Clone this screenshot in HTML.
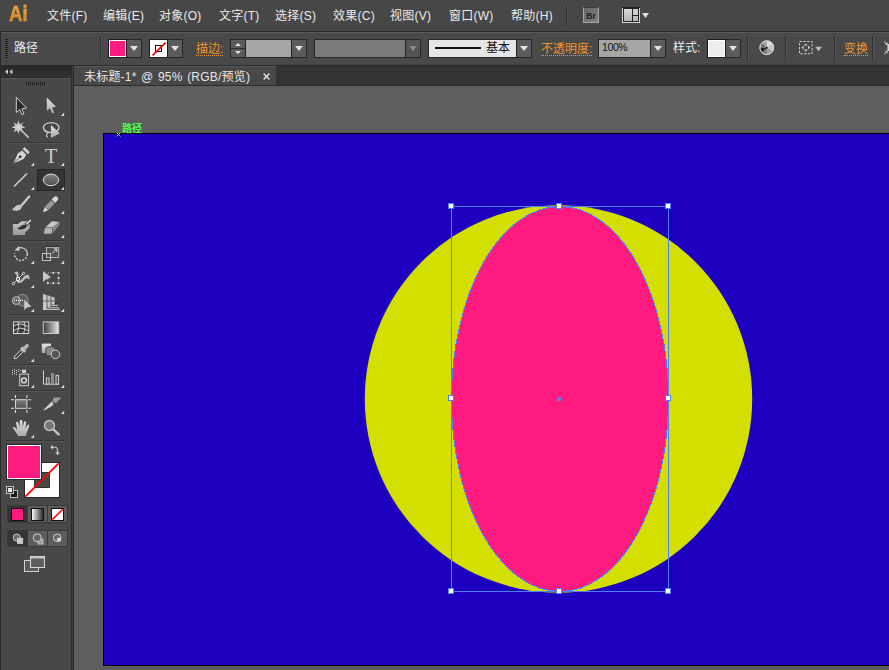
<!DOCTYPE html>
<html lang="zh-CN"><head><meta charset="utf-8"><title>未标题-1* @ 95% (RGB/预览)</title>
<style>
html,body{margin:0;padding:0;}
body{width:889px;height:670px;overflow:hidden;position:relative;background:#616161;font-family:"Liberation Sans","Noto Sans CJK SC",sans-serif;font-size:13px;color:#e6e6e6;}
.abs,#menubar,#ctrl,#tools,#tabbar,#canvas,#artboard{position:absolute;}
#menubar{left:0;top:0;width:889px;height:31px;background:#474747;}
#menubar span.m{position:absolute;top:8px;font-size:12px;line-height:17px;letter-spacing:0.25px;color:#eaeaea;white-space:nowrap;}
#ailogo{position:absolute;left:8.6px;top:2.8px;font-size:21.5px;line-height:23px;font-weight:bold;color:#dc9632;-webkit-text-stroke:0.35px #d8953a;transform:scaleX(0.87);transform-origin:0 0;background:linear-gradient(#e8a84a,#c98320);-webkit-background-clip:text;background-clip:text;-webkit-text-fill-color:transparent;}
#ctrl{left:0;top:31px;width:889px;height:35px;background:#2a2a2a;}
#ctrl .bar{position:absolute;left:1px;top:1px;width:888px;height:33px;background:#494949;border-top:1px solid #5a5a5a;box-sizing:border-box;}
#tools{left:0;top:66px;width:71px;height:604px;background:#484848;border-left:1px solid #2a2a2a;box-sizing:border-box;}
#tabbar{left:74px;top:66px;width:815px;height:19px;background:#333;border-bottom:1px solid #2c2c2c;}
#tab{position:absolute;left:0;top:0;width:202px;height:19px;background:#484848;border-top:1px solid #585858;box-sizing:border-box;}
#tab span{position:absolute;left:10px;top:3px;font-size:12px;line-height:15px;letter-spacing:0.2px;word-spacing:1px;color:#e8e8e8;white-space:nowrap;}
#tab svg{position:absolute;left:189px;top:6px;}
#canvas{left:74px;top:86px;width:815px;height:584px;background:#5e5e5e;}
#artboard{left:103px;top:133px;width:800px;height:531px;background:#1e00c0;border:1px solid #000;}

#ctrl .grip{position:absolute;left:5px;top:8px;width:3px;height:20px;background:repeating-linear-gradient(#222 0,#222 1px,transparent 1px,transparent 2px);}
#ctrl .lbl{position:absolute;top:8px;font-size:12px;line-height:18px;color:#ececec;white-space:nowrap;}
#ctrl .lbl.or{color:#f0952a;border-bottom:1px dotted #f0952a;line-height:12px;top:12px;}
#ctrl .vsep{position:absolute;top:5px;width:1px;height:25px;background:#333;border-right:1px solid #555;}
#ctrl .sw{position:absolute;top:8px;width:17px;height:17px;border:1px solid #1d1d1d;background:#fff;}
#ctrl .sw i{position:absolute;left:1px;top:1px;right:1px;bottom:1px;}
#ctrl .dd{position:absolute;top:8px;width:14px;height:17px;border:1px solid #262626;border-left:none;background:#5b5b5b;}
#ctrl .dd b{position:absolute;left:50%;top:6px;margin-left:-4px;width:0;height:0;border-left:4px solid transparent;border-right:4px solid transparent;border-top:5.4px solid #e2e2e2;}
#ctrl .dd.dis{background:#555;}
#ctrl .dd.dis b{border-top-color:#8a8a8a;}
#ctrl .inp{position:absolute;top:8px;height:17px;border:1px solid #262626;background:#a6a6a6;box-sizing:content-box;}
#ctrl .inp.dis{background:#7b7b7b;}
#ctrl .inp.lt{background:#e6e6e6;color:#111;}
#ctrl .inp.lt em{position:absolute;left:6px;top:7px;width:46px;height:2.3px;background:#111;}
#ctrl .inp.lt span{position:absolute;left:57px;top:-1px;font-size:12px;line-height:18px;color:#111;}
#ctrl .inp .t{position:absolute;left:3px;top:0;font-size:10.5px;line-height:15px;color:#111;letter-spacing:-0.4px;}
#ctrl .spin{position:absolute;top:8px;width:14px;height:17px;border:1px solid #262626;border-right:none;background:#5b5b5b;}
#ctrl .spin u{position:absolute;left:4px;top:3px;width:0;height:0;border-left:3.2px solid transparent;border-right:3.2px solid transparent;border-bottom:3.4px solid #e8e8e8;}
#ctrl .spin:after{content:"";position:absolute;left:0;right:0;top:8px;height:1px;background:#2a2a2a;}
#ctrl .spin s{position:absolute;left:4px;top:11.4px;width:0;height:0;border-left:3.2px solid transparent;border-right:3.2px solid transparent;border-top:3.4px solid #e8e8e8;}
</style></head><body>
<div id="canvas"></div>
<div id="artboard"></div>
<svg class="abs" id="art" style="left:0;top:0" width="889" height="670" viewBox="0 0 889 670">
  <circle cx="558.5" cy="398.9" r="193.7" fill="#d2df00"/>
  <ellipse cx="560" cy="399" rx="108.5" ry="192.5" fill="#ff1a80" stroke="#4f80ff" stroke-width="1" shape-rendering="crispEdges"/>
  <rect x="451.5" y="206.5" width="217" height="385" fill="none" stroke="#4f80ff" stroke-width="1" shape-rendering="crispEdges"/>
  <g shape-rendering="crispEdges"><rect x="448" y="203" width="6" height="6" fill="#4f80ff"/><rect x="449" y="204" width="4" height="4" fill="#fff"/><rect x="556" y="203" width="6" height="6" fill="#4f80ff"/><rect x="557" y="204" width="4" height="4" fill="#fff"/><rect x="665" y="203" width="6" height="6" fill="#4f80ff"/><rect x="666" y="204" width="4" height="4" fill="#fff"/><rect x="448" y="395" width="6" height="6" fill="#4f80ff"/><rect x="449" y="396" width="4" height="4" fill="#fff"/><rect x="665" y="395" width="6" height="6" fill="#4f80ff"/><rect x="666" y="396" width="4" height="4" fill="#fff"/><rect x="448" y="588" width="6" height="6" fill="#4f80ff"/><rect x="449" y="589" width="4" height="4" fill="#fff"/><rect x="556" y="588" width="6" height="6" fill="#4f80ff"/><rect x="557" y="589" width="4" height="4" fill="#fff"/><rect x="665" y="588" width="6" height="6" fill="#4f80ff"/><rect x="666" y="589" width="4" height="4" fill="#fff"/><rect x="557" y="397" width="4" height="4" fill="#4f80ff"/></g>
  <path d="M116.5 132.5L120.5 136.5M120.5 132.5L116.5 136.5" stroke="#4fff4f" stroke-width="1"/>
  <text x="122" y="132.2" font-family="'Liberation Sans','Noto Sans CJK SC',sans-serif" font-size="10" font-weight="bold" fill="#4fff4f">路径</text>
</svg>
<div id="menubar">
  <div id="ailogo">Ai</div>
  <div class="abs" style="left:566px;top:5px;width:1px;height:20px;background:#2e2e2e;border-right:1px solid #525252"></div>
  <div class="abs" id="br" style="left:583px;top:7px;width:16px;height:16px;box-sizing:border-box;background:linear-gradient(135deg,#666,#828282);border:1px solid #a8a8a8;border-top-color:#3a3a3a;"><span style="position:absolute;left:0;top:4px;width:14px;text-align:center;font-size:8.5px;line-height:9px;font-weight:bold;color:#1c1c1c;">Br</span></div>
  <svg class="abs" style="left:621px;top:6px" width="30" height="18" viewBox="621 6 30 18">
    <defs><linearGradient id="gLay" x1="0" y1="0" x2="0" y2="1"><stop offset="0" stop-color="#dadada"/><stop offset="1" stop-color="#b4b4b4"/></linearGradient></defs>
    <rect x="622" y="7" width="18" height="16" fill="#d6d6d6"/>
    <rect x="622" y="7" width="18" height="1" fill="#1e1e1e"/>
    <rect x="623" y="8" width="16" height="14" fill="#222"/>
    <rect x="624" y="9" width="8" height="12" fill="url(#gLay)"/>
    <rect x="633" y="9" width="5" height="6" fill="#d0d0d0"/>
    <rect x="633" y="16" width="5" height="5" fill="#bcbcbc"/>
    <path d="M642 13H649L645.5 18Z" fill="#dedede"/>
  </svg>
  <span class="m" style="left:47px">文件(F)</span>
  <span class="m" style="left:103px">编辑(E)</span>
  <span class="m" style="left:159px">对象(O)</span>
  <span class="m" style="left:219px">文字(T)</span>
  <span class="m" style="left:275px">选择(S)</span>
  <span class="m" style="left:333px">效果(C)</span>
  <span class="m" style="left:390px">视图(V)</span>
  <span class="m" style="left:449px">窗口(W)</span>
  <span class="m" style="left:511px">帮助(H)</span>
</div>
<div id="ctrl"><div class="bar"></div>
  <div class="grip"></div>
  <span class="lbl" style="left:14px">路径</span>
  <div class="vsep" style="left:100px"></div>
  <div class="sw" style="left:108px"><i style="background:#ff1a80"></i></div><div class="dd" style="left:127px"><b></b></div>
  <div class="sw" style="left:149px"><i style="background:#fff"></i><svg width="19" height="19" viewBox="0 0 19 19" style="position:absolute;left:0;top:0"><rect x="5.5" y="5.5" width="6" height="6" fill="none" stroke="#111" stroke-width="1"/><line x1="2.6" y1="15.4" x2="15.6" y2="2.6" stroke="#f00" stroke-width="1.8"/></svg></div><div class="dd" style="left:168px"><b></b></div>
  <span class="lbl or" style="left:196px">描边:</span>
  <div class="spin" style="left:230px"><u></u><s></s></div><div class="inp" style="left:245px;width:45px"></div><div class="dd" style="left:292px"><b></b></div>
  <div class="inp dis" style="left:314px;width:90px"></div><div class="dd dis" style="left:406px"><b></b></div>
  <div class="inp lt" style="left:428px;width:87px"><em></em><span>基本</span></div><div class="dd" style="left:517px"><b></b></div>
  <span class="lbl or" style="left:541px">不透明度:</span>
  <div class="inp" style="left:598px;width:51px"><span class="t">100%</span></div><div class="dd" style="left:651px"><b></b></div>
  <span class="lbl" style="left:673px">样式:</span>
  <div class="sw" style="left:707px"><i style="background:#ececec"></i></div><div class="dd" style="left:726px"><b></b></div>
  <div class="vsep" style="left:747px"></div>
  <div class="vsep" style="left:785px"></div>
  <div class="vsep" style="left:834px"></div>
  <div class="vsep" style="left:872px"></div>
  <svg class="abs" style="left:755px;top:4px" width="134" height="28" viewBox="755 35 134 28">
    <defs>
      <linearGradient id="gw1" x1="0" y1="1" x2="1" y2="0"><stop offset="0" stop-color="#444"/><stop offset="0.45" stop-color="#9a9a9a"/><stop offset="1" stop-color="#e4e4e4"/></linearGradient>
    </defs>
    <circle cx="766.8" cy="47.7" r="6.9" fill="#b0b0b0" stroke="#cfcfcf" stroke-width="0.9"/><path d="M766.8 47.7L766.80 41.10A6.6 6.6 0 0 1 772.52 44.40Z" fill="#dcdcdc"/><path d="M766.8 47.7L772.52 44.40A6.6 6.6 0 0 1 772.52 51.00Z" fill="#c6c6c6"/><path d="M766.8 47.7L772.52 51.00A6.6 6.6 0 0 1 766.80 54.30Z" fill="#a4a4a4"/><path d="M766.8 47.7L766.80 54.30A6.6 6.6 0 0 1 762.13 52.37Z" fill="#7c7c7c"/><path d="M766.8 47.7L762.13 52.37A6.6 6.6 0 0 1 760.20 47.70Z" fill="#242424"/><path d="M766.8 47.7L760.20 47.70A6.6 6.6 0 0 1 762.13 43.03Z" fill="#6c6c6c"/><path d="M766.8 47.7L762.13 43.03A6.6 6.6 0 0 1 766.80 41.10Z" fill="#a0a0a0"/><circle cx="766.8" cy="47.7" r="6.9" fill="none" stroke="#d4d4d4" stroke-width="0.9"/><circle cx="766.8" cy="47.7" r="1" fill="#1a1a1a"/>
    <rect x="799.5" y="41.5" width="12.6" height="12.2" fill="none" stroke="#d0d0d0" stroke-width="1" stroke-dasharray="2.4 1.4"/>
    <path d="M805.8 43.4L807.8 45.6H803.8ZM805.8 51.8L807.8 49.6H803.8ZM801.4 47.6L803.6 45.6V49.6ZM810.2 47.6L808 45.6V49.6Z" fill="#c8c8c8"/>
    <path d="M815 46.8H822L818.5 51.2Z" fill="#bdbdbd"/>
    <rect x="887.4" y="44" width="2" height="7" fill="#d4d4d4"/>
    <path d="M884 41.4L887 44.2M884 54.2L887 51.4" stroke="#d4d4d4" stroke-width="1"/>
    <path d="M885.2 44.4H887.2V42.4M885.2 51.2H887.2V53.2" stroke="#d4d4d4" stroke-width="0.9" fill="none"/>
  </svg>
  <span class="lbl or" style="left:844px">变换</span>
</div>
<div id="tools"></div>
<svg class="abs" id="toolsvg" style="left:0;top:66px" width="74" height="604" viewBox="0 66 74 604">
<defs>
<linearGradient id="gL" x1="0" y1="0" x2="0" y2="1"><stop offset="0" stop-color="#e2e2e2"/><stop offset="1" stop-color="#a8a8a8"/></linearGradient>
<linearGradient id="gH" x1="0" y1="0" x2="1" y2="0"><stop offset="0" stop-color="#3a3a3a"/><stop offset="1" stop-color="#e8e8e8"/></linearGradient>
<linearGradient id="gD" x1="0" y1="0" x2="0" y2="1"><stop offset="0" stop-color="#808080"/><stop offset="1" stop-color="#505050"/></linearGradient>
<linearGradient id="gHd" x1="0" y1="0" x2="0" y2="1"><stop offset="0" stop-color="#262626"/><stop offset="1" stop-color="#343434"/></linearGradient>
<linearGradient id="gL2" x1="0" y1="0" x2="0" y2="1"><stop offset="0" stop-color="#c8c8c8"/><stop offset="1" stop-color="#989898"/></linearGradient>
<path id="tri" d="M3.1 -0.2V3.1H-0.2Z" fill="#d8d8d8"/>
<linearGradient id="gWB" x1="0" y1="0" x2="1" y2="0"><stop offset="0" stop-color="#fff"/><stop offset="1" stop-color="#222"/></linearGradient>
</defs>
<!-- header -->
<rect x="1" y="66" width="70" height="11" fill="url(#gHd)"/>
<rect x="1" y="77" width="70" height="1" fill="#2a2a2a"/>
<rect x="1" y="78" width="70" height="1" fill="#565656"/>
<path d="M8 69.2V74.2L5 71.7ZM12.4 69.2V74.2L9.4 71.7Z" fill="#cfcfcf"/>
<g fill="#1e1e1e"><rect x="26" y="82" width="1" height="3.4"/><rect x="28" y="82" width="1" height="3.4"/><rect x="30" y="82" width="1" height="3.4"/><rect x="32" y="82" width="1" height="3.4"/><rect x="34" y="82" width="1" height="3.4"/><rect x="36" y="82" width="1" height="3.4"/><rect x="38" y="82" width="1" height="3.4"/><rect x="40" y="82" width="1" height="3.4"/><rect x="42" y="82" width="1" height="3.4"/><rect x="44" y="82" width="1" height="3.4"/></g>
<!-- separators -->
<g id="seps">
<rect x="6" y="142" width="60" height="1" fill="#363636"/><rect x="6" y="143" width="60" height="1" fill="#555"/>
<rect x="6" y="240" width="60" height="1" fill="#363636"/><rect x="6" y="241" width="60" height="1" fill="#555"/>
<rect x="6" y="314" width="60" height="1" fill="#363636"/><rect x="6" y="315" width="60" height="1" fill="#555"/>
<rect x="6" y="364" width="60" height="1" fill="#363636"/><rect x="6" y="365" width="60" height="1" fill="#555"/>
<rect x="6" y="390" width="60" height="1" fill="#363636"/><rect x="6" y="391" width="60" height="1" fill="#555"/>
<rect x="6" y="440" width="60" height="1" fill="#363636"/><rect x="6" y="441" width="60" height="1" fill="#555"/>
</g>
<!-- flyout triangles -->
<g id="tris">
<use href="#tri" x="61" y="112.8"/>
<use href="#tri" x="31" y="162.8"/><use href="#tri" x="61" y="162.8"/>
<use href="#tri" x="31" y="187"/>
<use href="#tri" x="61" y="211"/>
<use href="#tri" x="61" y="235"/>
<use href="#tri" x="31" y="260.8"/><use href="#tri" x="61" y="260.8"/>
<use href="#tri" x="31" y="285"/>
<use href="#tri" x="31" y="309"/><use href="#tri" x="61" y="309"/>
<use href="#tri" x="31" y="358.8"/>
<use href="#tri" x="31" y="385"/><use href="#tri" x="61" y="385"/>
<use href="#tri" x="61" y="411"/>
<use href="#tri" x="31" y="435"/>
</g>
<!-- selection tool -->
<path d="M16.3 97.3V112.6L19.6 109.6L21.9 114.6L24 113.7L21.8 108.8L26.5 108Z" fill="#2a2a2a" stroke="#cfcfcf" stroke-width="1" stroke-linejoin="miter"/>
<!-- direct selection -->
<path d="M46.8 97.5V111L49.9 108.3L52.3 113.5L54.2 112.6L51.9 107.5L56 106.8Z" fill="url(#gL)"/>
<!-- magic wand -->
<path d="M18.4 120.2L19.8 124.4L23.4 122.2L21.6 125.8L25.6 127.2L21.6 128.5L23 132L19.6 130.2L18.4 134L17.2 130.2L13.6 132.2L15.3 128.6L11.4 127.2L15.3 125.8L13.5 122.2L17.1 124.4Z" fill="#cdcdcd"/>
<path d="M21 130L28.6 137.6" stroke="#c8c8c8" stroke-width="1.6" fill="none"/>
<!-- lasso -->
<ellipse cx="51.2" cy="127.6" rx="7.8" ry="5" fill="none" stroke="#cdcdcd" stroke-width="1.3"/>
<path d="M44.5 131.5C47 131 48 133 46.8 134.6C46 135.8 47 137 48 137" fill="none" stroke="#cdcdcd" stroke-width="1.1"/>
<path d="M51 125V138L59.8 133.2Z" fill="url(#gL)"/>
<!-- pen -->
<g transform="translate(13.4 163.5) rotate(-45)">
<path d="M0 0L10.4 -4.1L15.4 -2.9V2.9L10.4 4.1Z" fill="#d4d4d4"/>
<path d="M0 0H8.6" stroke="#555" stroke-width="0.8"/>
<circle cx="9.6" cy="0" r="1.3" fill="#222"/>
<rect x="16.8" y="-3.7" width="2.7" height="7.4" fill="#cfcfcf"/>
</g>
<!-- T -->
<text x="51.1" y="162.9" text-anchor="middle" font-family="'Liberation Serif',serif" font-size="21" fill="#c8c8c8" textLength="12.6" lengthAdjust="spacingAndGlyphs">T</text>
<!-- line -->
<path d="M14 186.6L27 173.4" stroke="#d4d4d4" stroke-width="1.4"/>
<!-- ellipse tool selected -->
<rect x="37.5" y="169.5" width="27" height="21" fill="#343434" stroke="#262626"/>
<ellipse cx="51" cy="179.9" rx="7.7" ry="5.8" fill="url(#gD)" stroke="#dcdcdc" stroke-width="1"/>
<use href="#tri" x="61" y="187"/>
<!-- paintbrush -->
<path d="M29.2 196.4L20.6 206.6" stroke="#c8c8c8" stroke-width="2.3" stroke-linecap="round"/>
<path d="M19.4 204.8C15.6 204.6 14.6 208.4 11.6 209.4C15 211.4 20.8 211.8 21.6 207Z" fill="#c4c4c4"/>
<!-- pencil -->
<g transform="translate(43 212.2) rotate(-46.5)">
<path d="M0 0L5 -2.5V2.5Z" fill="#d8d8d8"/>
<rect x="5.6" y="-2.5" width="8.6" height="5" fill="#9a9a9a"/>
<path d="M15 -2.5H18.4A2.5 2.5 0 0 1 18.4 2.5H15Z" fill="#d4d4d4"/>
</g>
<!-- blob brush -->
<path d="M12.9 223.4H18.1L21.2 220.7H27.4L29.6 223.4V228.5L25.2 232.2V235H12.9Z" fill="url(#gL2)"/>
<path d="M12.9 223.4H18.1L21.2 220.7H26" fill="none" stroke="#2c2c2c" stroke-width="0.9"/>
<path d="M17.1 228.7C19.4 227.8 20.6 225.6 22.6 225C24 224.5 25.4 224.3 26.4 224.6C27.4 225.6 26.6 227.4 24.8 228.4C22.6 229.6 19.4 229.8 17.1 228.7Z" fill="#333"/>
<path d="M25.6 225L31.4 219.7" stroke="#454545" stroke-width="3.6"/><path d="M26.2 224.4L30.8 220.2" stroke="#d4d4d4" stroke-width="1.8"/>
<!-- eraser -->
<path d="M44.8 227.3L51.9 220.7L59.7 221.4L52.9 227.5Z" fill="#c6c6c6"/>
<path d="M44.9 228L52.4 228L51.7 233.7H43.8Z" fill="#b2b2b2"/>
<path d="M53 227.7L59.7 221.7V224.6L52.4 233.4Z" fill="#8c8c8c"/>
<path d="M44.8 227.3L51.9 220.7L59.7 221.4" fill="none" stroke="#2e2e2e" stroke-width="0.8"/>
<!-- rotate -->
<path d="M16.6 249.4A6.4 6.4 0 0 1 27.3 254" fill="none" stroke="#cdcdcd" stroke-width="1.3"/>
<path d="M27.3 254A6.4 6.4 0 1 1 14.6 253" fill="none" stroke="#cdcdcd" stroke-width="1.5" stroke-dasharray="1.9 1.5"/>
<path d="M14.6 250.6L19.2 245.8L19.6 250.8Z" fill="#cdcdcd"/>
<!-- scale -->
<rect x="42.5" y="253.5" width="8" height="7" fill="#404040" stroke="#c4c4c4" stroke-width="0.9"/>
<rect x="46.5" y="247.3" width="12.2" height="10.2" fill="#505050" stroke="#c4c4c4" stroke-width="0.9"/>
<rect x="46" y="245.9" width="13.2" height="0.9" fill="#2a2a2a"/>
<rect x="42.5" y="253.5" width="8" height="7" fill="none" stroke="#c4c4c4" stroke-width="0.9"/>
<path d="M52 253.6L56.6 249M53.6 248.8H56.8V252" stroke="#e0e0e0" stroke-width="1" fill="none"/>
<!-- width tool -->
<path d="M14.2 273.6C15 270.6 18.4 270.6 18.6 274C18.8 277.4 17.4 279.8 19.4 280.4C22 281.2 23.6 274.6 27.4 274.8C29.4 275 29.8 277.8 29.4 280C28.4 278.6 27.2 277.6 25.8 278.6C23.8 280.2 22 283.4 18.6 283C15.4 282.6 16.6 278 16.6 275.6C16.6 274.2 15.4 273.6 14.2 273.6Z" fill="#bdbdbd"/>
<path d="M13.4 283.6L23.4 273.6" stroke="#eee" stroke-width="0.9"/>
<circle cx="13.4" cy="283.6" r="1.2" fill="#444" stroke="#f2f2f2" stroke-width="0.8"/>
<circle cx="23.5" cy="273.4" r="1.1" fill="#444" stroke="#f2f2f2" stroke-width="0.8"/>
<circle cx="18" cy="279" r="1.6" fill="#555" stroke="#fafafa" stroke-width="1"/>
<!-- free transform -->
<rect x="47.8" y="272.8" width="10.8" height="10.4" fill="none" stroke="#b4b4b4" stroke-width="0.8" stroke-dasharray="1.2 1"/>
<g fill="#e0e0e0"><rect x="52.300000000000004" y="271.90000000000003" width="1.8" height="1.8"/><rect x="57.7" y="271.90000000000003" width="1.8" height="1.8"/><rect x="57.7" y="277.1" width="1.8" height="1.8"/><rect x="46.9" y="282.3" width="1.8" height="1.8"/><rect x="52.300000000000004" y="282.3" width="1.8" height="1.8"/><rect x="57.7" y="282.3" width="1.8" height="1.8"/></g>
<path d="M43 271V282L45.8 279.4L51 277.6Z" fill="#c6c6c6"/>
<!-- shape builder -->
<circle cx="22.4" cy="300.2" r="5.8" fill="#5c5c5c" stroke="#9a9a9a" stroke-width="1"/>
<circle cx="16.3" cy="300.6" r="3.9" fill="#666" stroke="#c4c4c4" stroke-width="1"/>
<path d="M14 300.4H24" stroke="#fff" stroke-width="1.1" stroke-dasharray="1 1"/>
<path d="M24.2 299.6V310.2L27 307.4L31.4 306.4Z" fill="#c8c8c8"/>
<!-- perspective grid -->
<path d="M43 294L46.6 295V309.8H43Z" fill="#c8c8c8"/>
<path d="M47.4 295.3L50.6 296.3V307H47.4Z" fill="#c0c0c0"/>
<path d="M51.4 296.6L54.6 297.6V304.6H51.4Z" fill="#c4c4c4"/>
<path d="M43 301H54.6" stroke="#555" stroke-width="0.9"/>
<path d="M51.4 305.4H58" stroke="#d0d0d0" stroke-width="1"/>
<path d="M47.4 307.6H59" stroke="#a8a8a8" stroke-width="1"/>
<path d="M43 309.3H59.8" stroke="#d4d4d4" stroke-width="1.1"/>
<path d="M54.8 303.6H57.6" stroke="#2c2c2c" stroke-width="1"/>
<!-- mesh -->
<rect x="13.5" y="321.9" width="15.2" height="11.6" fill="#3a3a3a" stroke="#d4d4d4"/>
<path d="M13.5 326C18 323.6 22 323 28.7 327M13.5 331C18 327.6 22 327 28.7 331M18 321.9C19 326 19 329 17 333.5M24 321.9C25.6 326 25.4 330 23.4 333.5" fill="none" stroke="#e0e0e0" stroke-width="0.9"/>
<!-- gradient -->
<rect x="43.3" y="321.9" width="15.4" height="11.6" fill="url(#gH)" stroke="#c8c8c8"/>
<!-- eyedropper -->
<g transform="translate(14.2 358.6) rotate(-45)">
<path d="M0 0L2 -1.5H11V1.5H2Z" fill="#4a4a4a" stroke="#d8d8d8" stroke-width="0.9"/>
<rect x="11.4" y="-3" width="2.6" height="6" fill="#c4c4c4"/>
<path d="M14 -1.9H18.2A1.9 1.9 0 0 1 18.2 1.9H14Z" fill="#b0b0b0"/>
</g>
<!-- blend -->
<rect x="41.8" y="343.6" width="9.2" height="9.4" fill="url(#gL)"/>
<rect x="45.8" y="346.8" width="9.2" height="9" rx="2.6" fill="#888" stroke="#3a3a3a" stroke-width="0.9"/>
<circle cx="55.4" cy="354.4" r="4.3" fill="#565656" stroke="#d0d0d0" stroke-width="1"/>
<!-- symbol sprayer -->
<rect x="19.7" y="374.1" width="8.8" height="11.6" fill="#4a4a4a" stroke="#cfcfcf"/>
<rect x="22" y="369.6" width="4" height="3.4" fill="#cfcfcf"/>
<circle cx="24" cy="380.4" r="2.4" fill="none" stroke="#d8d8d8" stroke-width="1.5"/>
<g fill="#cfcfcf"><rect x="14" y="369" width="1" height="1"/><rect x="18" y="369" width="1" height="1"/><rect x="12" y="370" width="1" height="1"/><rect x="16" y="370" width="1" height="1"/><rect x="20" y="370" width="1" height="1"/><rect x="14" y="371" width="1" height="1"/><rect x="18" y="371" width="1" height="1"/><rect x="12" y="372" width="1" height="1"/><rect x="16" y="372" width="1" height="1"/><rect x="14" y="373" width="1" height="1"/><rect x="12" y="374" width="1" height="1"/><rect x="16" y="374" width="1" height="1"/></g>
<!-- graph -->
<path d="M43.5 370.4V384.2H59" fill="none" stroke="#d0d0d0" stroke-width="1"/>
<rect x="46.4" y="378" width="2.6" height="6" fill="#555" stroke="#d4d4d4" stroke-width="0.9"/>
<rect x="51" y="373" width="3" height="11" fill="#8c8c8c"/>
<rect x="56" y="375.4" width="2.6" height="8.6" fill="#555" stroke="#d4d4d4" stroke-width="0.9"/>
<!-- artboard tool -->
<rect x="15.5" y="399.7" width="11.4" height="8.6" fill="url(#gD)" stroke="#d8d8d8"/>
<path d="M15.5 395V398M26.9 395V398M15.5 410V413M26.9 410V413M11 399.7H14M11 408.3H14M28.4 399.7H31.2M28.4 408.3H31.2" stroke="#e0e0e0" stroke-width="1.1"/>
<!-- slice -->
<path d="M54 397.6H61.4L55.8 403.4L52.4 401Z" fill="#9a9a9a"/>
<path d="M52 401.2L53.6 404.4C50 407.6 46.6 409.4 42.8 410.8C46 407 49 404 52 401.2Z" fill="#d0d0d0"/>
<!-- hand -->
<path d="M18.2 436C16 432.4 14.4 430 12.6 427.4C14.2 426.4 15.6 427.6 17.2 429.6L16 422.2C17.4 421.4 18.2 422 18.6 423.4L19.6 427.4L19.8 420.4C21.2 419.4 22.2 420 22.4 421.4L22.6 427.2L24.2 421.4C25.6 420.8 26.4 421.6 26.2 423L25.4 428.2L27.8 424.6C29 424.4 29.6 425.2 29.2 426.4C28 429.6 26.6 432.6 26 436Z" fill="url(#gL)"/>
<!-- zoom -->
<circle cx="49.5" cy="425.5" r="5" fill="#767676" stroke="#c8c8c8" stroke-width="1.3"/>
<path d="M53.4 429.4L58.6 434.4" stroke="#c4c4c4" stroke-width="2.4" stroke-linecap="round"/>
<!-- fill / stroke -->
<g id="fs">
<rect x="24.5" y="462.5" width="35" height="35" fill="#fff" stroke="#2a2a2a"/>
<rect x="34.5" y="472.5" width="15" height="15" fill="#484848" stroke="#333" stroke-width="1"/>
<path d="M25.4 496.6L58.6 463.4" stroke="#f00" stroke-width="1.8"/>
<rect x="6.5" y="444.5" width="35" height="35" fill="#fff" stroke="#2a2a2a"/>
<rect x="8" y="446" width="32" height="32" fill="#ff1a80"/>
<!-- swap -->
<path d="M52.2 447.2H55.4C57.4 447.2 57.6 449 57.6 452.4" fill="none" stroke="#cdcdcd" stroke-width="1.1"/>
<path d="M50.2 447.2L53 445V449.4ZM55.4 452.2H59.8L57.6 455.2Z" fill="#cdcdcd"/>
<!-- default -->
<rect x="10.5" y="490.5" width="7" height="7" fill="#1a1a1a" stroke="#bdbdbd"/>
<rect x="6.5" y="486.5" width="7" height="7" fill="#e8e8e8" stroke="#bdbdbd"/>
<rect x="7.5" y="487.5" width="5" height="5" fill="none" stroke="#3a3a3a"/>
</g>
<!-- colour mode buttons -->
<g id="cm">
<rect x="7.5" y="505.5" width="60" height="17" fill="#5c5c5c" stroke="#3a3a3a"/>
<rect x="8" y="506" width="19.5" height="16" fill="#343434"/>
<path d="M27.5 506V522M47.5 506V522" stroke="#3a3a3a"/>
<rect x="11.5" y="508.5" width="12" height="12" fill="#ff1a80" stroke="#111"/>
<rect x="31.5" y="508.5" width="12" height="12" fill="url(#gWB)" stroke="#111"/>
<rect x="51.5" y="508.5" width="12" height="12" fill="#fff" stroke="#111"/>
<path d="M52.2 519.8L62.8 509.2" stroke="#f00" stroke-width="1.6"/>
</g>
<!-- draw mode buttons -->
<g id="dm">
<rect x="7.5" y="530.5" width="60" height="16" fill="#5c5c5c" stroke="#3a3a3a"/>
<rect x="8" y="531" width="19.5" height="15" fill="#343434"/>
<path d="M27.5 531V546M47.5 531V546" stroke="#3a3a3a"/>
<circle cx="16.8" cy="537.6" r="3.6" fill="#6a6a6a" stroke="#c8c8c8" stroke-width="1"/>
<rect x="17.4" y="538.2" width="5.4" height="5.4" fill="#c8c8c8" stroke="#e0e0e0" stroke-width="0.6"/>
<rect x="38" y="539" width="5" height="5" fill="#9a9a9a" stroke="#cfcfcf" stroke-width="0.8"/>
<circle cx="37.2" cy="537.8" r="4" fill="#666" stroke="#d0d0d0" stroke-width="1"/>
<circle cx="57.2" cy="537.8" r="3.8" fill="#666" stroke="#cfcfcf" stroke-width="1"/>
<rect x="57.2" y="537.8" width="3.6" height="3.6" fill="#dcdcdc"/>
</g>
<!-- screen mode -->
<g id="sm">
<rect x="24.5" y="560.5" width="14" height="11" fill="#5a5a5a" stroke="#d0d0d0"/>
<rect x="30.5" y="556.5" width="14" height="11" fill="#5e5e5e" stroke="#d8d8d8"/>
<rect x="31" y="557" width="13" height="1.6" fill="#bdbdbd"/>
</g>
</svg>

<div class="abs" style="left:71px;top:66px;width:3px;height:604px;background:linear-gradient(to right,#2b2b2b 0,#2b2b2b 1px,#3c3c3c 1px,#3c3c3c 2px,#2b2b2b 2px)"></div>
<div id="tabbar"><div id="tab"><span>未标题-1* @ 95% (RGB/预览)</span><svg width="7" height="7" viewBox="0 0 7 7"><path d="M0.6 0.6L6.4 6.4M6.4 0.6L0.6 6.4" stroke="#e4e4e4" stroke-width="1.4"/></svg></div></div>
</body></html>
